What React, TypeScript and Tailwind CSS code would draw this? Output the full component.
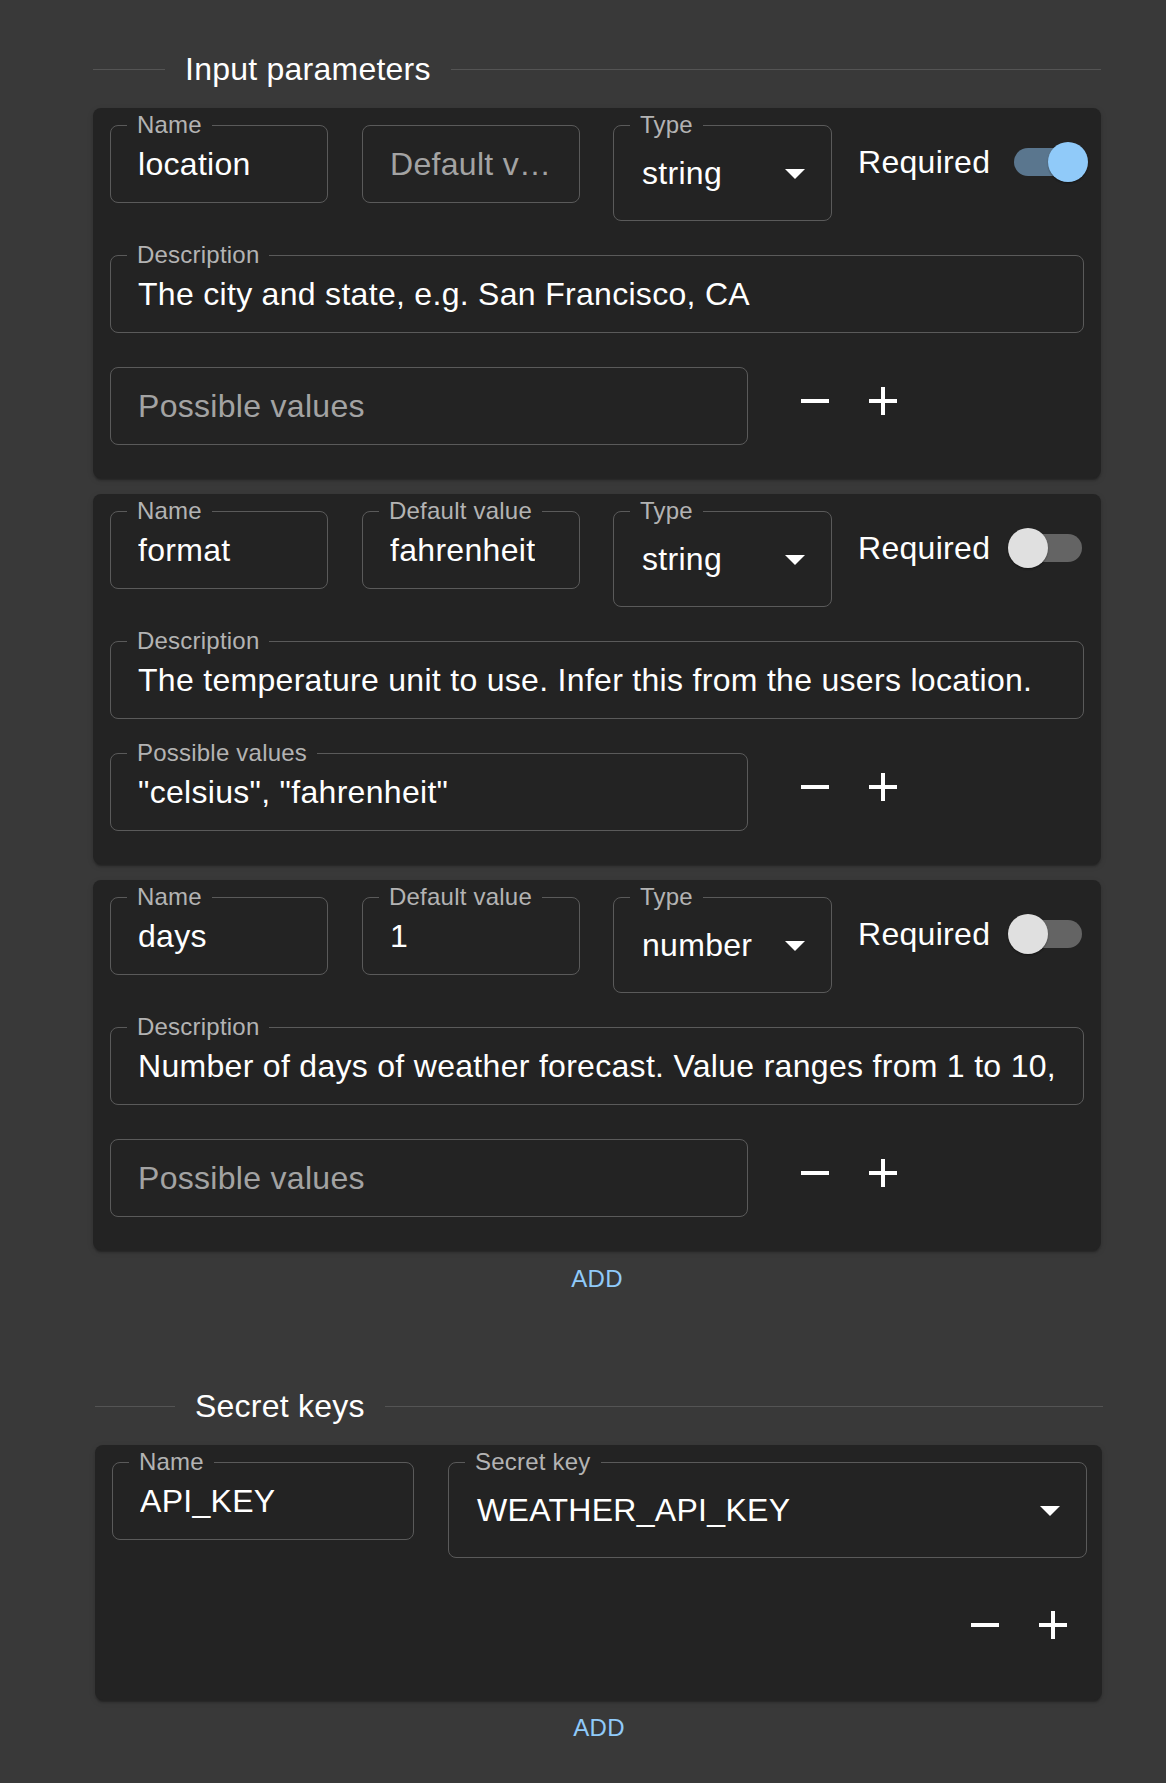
import React from "react";

type FieldProps = {
  label?: string;
  value?: string;
  placeholder?: string;
  w: string;
};

function Field({ label, value, placeholder, w }: FieldProps) {
  return (
    <div
      className={`relative flex h-[78px] shrink-0 items-center rounded-lg border border-[#5a5a5a] px-[27px] ${w}`}
    >
      {label && (
        <span className="absolute left-[16px] top-[-1px] -translate-y-1/2 bg-[#232323] px-[10px] text-[24px] leading-none tracking-[0.22px] text-[#b3b3b3]">
          {label}
        </span>
      )}
      {value ? (
        <span className="block overflow-hidden whitespace-nowrap text-[32px] leading-[1.25] tracking-[0.3px] text-white">
          {value}
        </span>
      ) : (
        <span className="block overflow-hidden text-ellipsis whitespace-nowrap text-[32px] leading-[1.25] tracking-[0.3px] text-[#a3a3a3]">
          {placeholder}
        </span>
      )}
    </div>
  );
}

function SelectField({ label, value, w }: { label: string; value: string; w: string }) {
  return (
    <div
      className={`relative flex h-[96px] shrink-0 items-center justify-between rounded-lg border border-[#5a5a5a] pl-[28px] pr-[26px] ${w}`}
    >
      <span className="absolute left-[16px] top-[-1px] -translate-y-1/2 bg-[#232323] px-[10px] text-[24px] leading-none tracking-[0.22px] text-[#b3b3b3]">
        {label}
      </span>
      <span className="block whitespace-nowrap text-[32px] leading-[1.25] tracking-[0.3px] text-white">
        {value}
      </span>
      <svg width="20" height="10" viewBox="0 0 20 10" className="mt-[2px]">
        <path d="M0 0L10 10L20 0Z" fill="#ffffff" />
      </svg>
    </div>
  );
}

function Switch({ on }: { on: boolean }) {
  return (
    <div className="relative h-[40px] w-[80px] shrink-0">
      <div
        className={`absolute left-[6px] top-[6px] h-[28px] w-[68px] rounded-full ${
          on ? "bg-[#5a768e]" : "bg-[#646464]"
        }`}
      />
      <div
        className={`absolute top-0 h-[40px] w-[40px] rounded-full shadow-[0_2px_2px_-1px_rgba(0,0,0,0.3),0_1px_2px_0_rgba(0,0,0,0.2)] ${
          on ? "left-[40px] bg-[#90caf9]" : "left-0 bg-[#e0e0e0]"
        }`}
      />
    </div>
  );
}

function MinusPlus() {
  return (
    <div className="flex shrink-0">
      <button className="flex h-[68px] w-[68px] items-center justify-center">
        <svg width="48" height="48" viewBox="0 0 24 24">
          <path d="M19 13H5v-2h14v2z" fill="#ffffff" />
        </svg>
      </button>
      <button className="flex h-[68px] w-[68px] items-center justify-center">
        <svg width="48" height="48" viewBox="0 0 24 24">
          <path d="M19 13h-6v6h-2v-6H5v-2h6V5h2v6h6v2z" fill="#ffffff" />
        </svg>
      </button>
    </div>
  );
}

const cardClass =
  "rounded-lg bg-[#232323] shadow-[0_4px_2px_-2px_rgba(0,0,0,0.2),0_2px_2px_0_rgba(0,0,0,0.14),0_2px_6px_0_rgba(0,0,0,0.12)]";

type Param = {
  name: string;
  def?: string;
  type: string;
  required: boolean;
  description: string;
  possible?: string;
};

const params: Param[] = [
  {
    name: "location",
    type: "string",
    required: true,
    description: "The city and state, e.g. San Francisco, CA",
  },
  {
    name: "format",
    def: "fahrenheit",
    type: "string",
    required: false,
    description: "The temperature unit to use. Infer this from the users location.",
    possible: '"celsius", "fahrenheit"',
  },
  {
    name: "days",
    def: "1",
    type: "number",
    required: false,
    description:
      "Number of days of weather forecast. Value ranges from 1 to 10, inclusive.",
  },
];

function ParamCard({ p }: { p: Param }) {
  return (
    <div className={`${cardClass} w-[1008px] px-[17px] pb-[33px] pt-[17px]`}>
      <div className="flex items-start">
        <Field w="w-[218px]" label="Name" value={p.name} />
        <div className="w-[34px] shrink-0" />
        {p.def ? (
          <Field w="w-[218px]" label="Default value" value={p.def} />
        ) : (
          <Field w="w-[218px]" placeholder="Default value" />
        )}
        <div className="w-[33px] shrink-0" />
        <SelectField w="w-[219px]" label="Type" value={p.type} />
        <div className="ml-[26px] flex h-[74px] items-center">
          <span className="text-[32px] leading-[1.25] tracking-[0.3px] text-white">Required</span>
          <div className="ml-[18px]">
            <Switch on={p.required} />
          </div>
        </div>
      </div>
      <div className="mt-[34px]">
        <Field w="w-[974px]" label="Description" value={p.description} />
      </div>
      <div className="mt-[34px] flex items-start">
        {p.possible ? (
          <Field w="w-[638px]" label="Possible values" value={p.possible} />
        ) : (
          <Field w="w-[638px]" placeholder="Possible values" />
        )}
        <div className="ml-[33px]">
          <MinusPlus />
        </div>
      </div>
    </div>
  );
}

function Header({ title, left }: { title: string; left: string }) {
  return (
    <div className="flex h-[40px] items-center">
      <div className={`h-px ${left} shrink-0 bg-[#545454]`} />
      <span className="mx-[20px] whitespace-nowrap text-[32px] leading-[1.25] tracking-[0.24px] text-white">
        {title}
      </span>
      <div className="h-px flex-1 bg-[#545454]" />
    </div>
  );
}

function AddButton() {
  return (
    <div className="flex items-center justify-center">
      <button className="text-[24px] leading-[1.25] tracking-[0.3px] text-[#90caf9]">ADD</button>
    </div>
  );
}

export default function App() {
  return (
    <div className="min-h-[1783px] w-full bg-[#393939] pt-[49px] font-[family-name:Liberation_Sans,Arial,sans-serif]">
      <div className="ml-[93px] w-[1008px]">
        <Header title="Input parameters" left="w-[72px]" />
        <div className="mt-[19px] flex flex-col gap-[16px]">
          {params.map((p) => (
            <ParamCard key={p.name} p={p} />
          ))}
        </div>
        <div className="flex h-[58px] items-center justify-center">
          <AddButton />
        </div>
      </div>

      <div className="ml-[95px] mt-[78px] w-[1008px]">
        <Header title="Secret keys" left="w-[80px]" />
        <div className={`${cardClass} mt-[19px] w-[1007px] pb-[41px] pl-[17px] pr-[15px] pt-[17px]`}>
          <div className="flex items-start">
            <Field w="w-[302px]" label="Name" value="API_KEY" />
            <div className="w-[34px] shrink-0" />
            <SelectField w="w-[639px]" label="Secret key" value="WEATHER_API_KEY" />
          </div>
          <div className="mt-[33px] flex justify-end">
            <MinusPlus />
          </div>
        </div>
        <div className="flex h-[56px] items-center justify-center">
          <AddButton />
        </div>
      </div>
    </div>
  );
}
